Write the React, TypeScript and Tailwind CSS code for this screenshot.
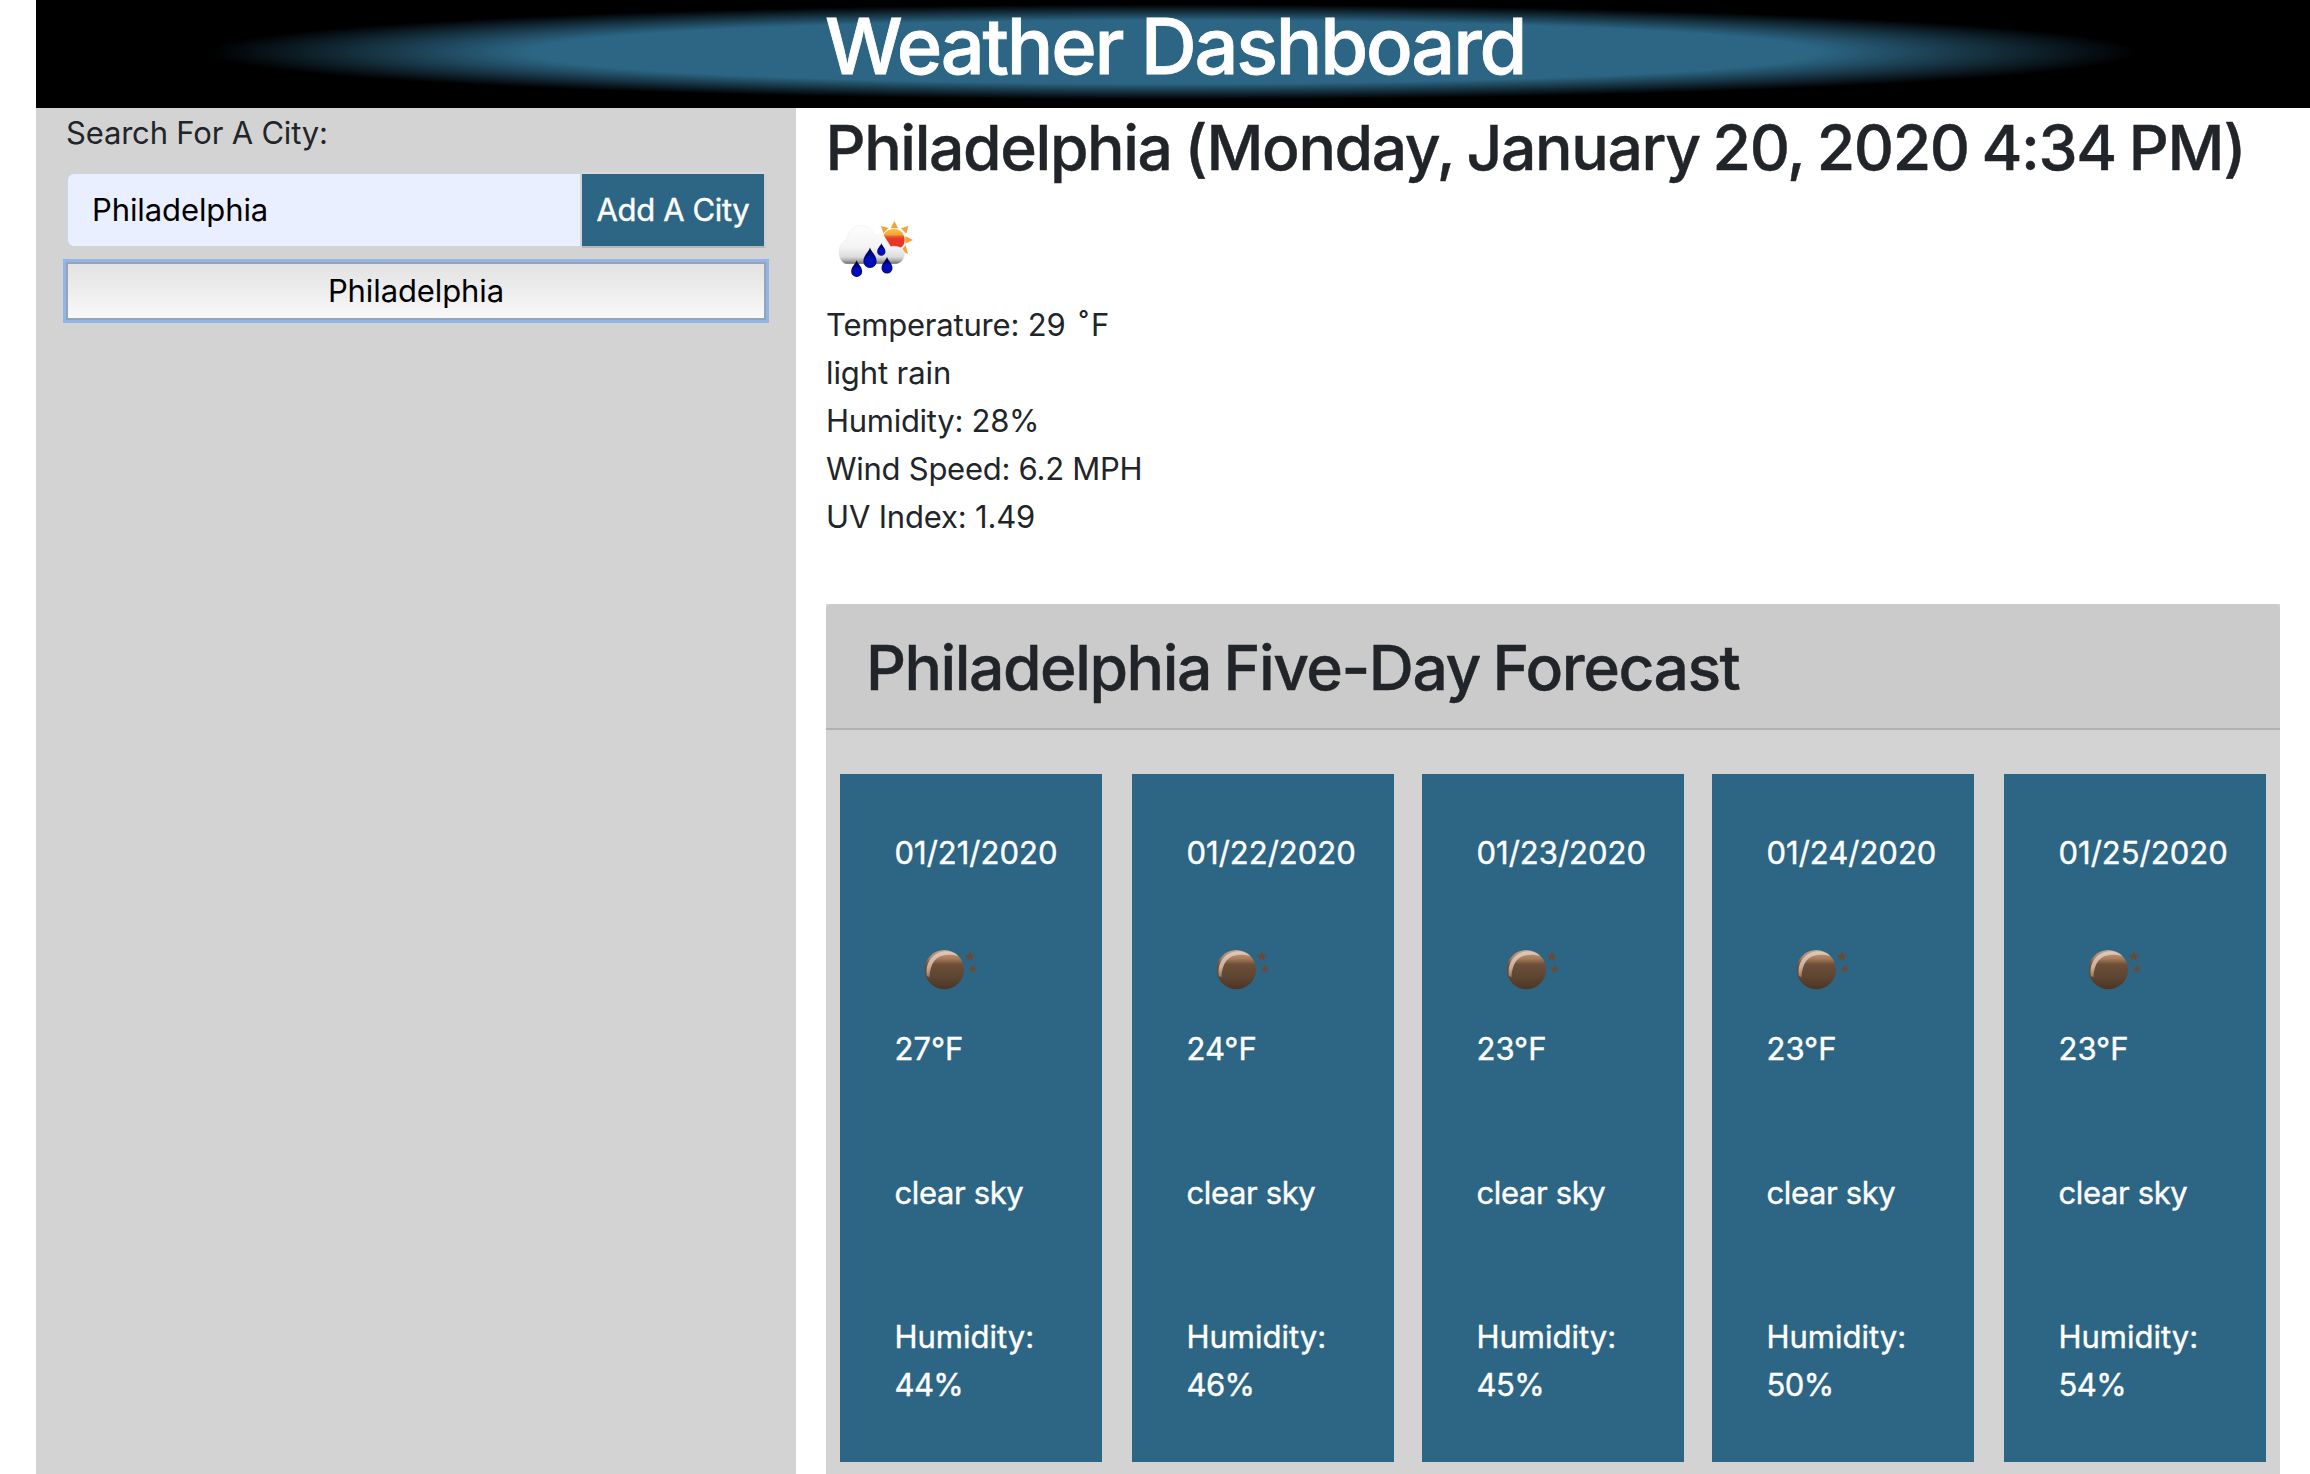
import React from "react";

const days = [
  { date: "01/21/2020", temp: "27°F", sky: "clear sky", humidity: "44%" },
  { date: "01/22/2020", temp: "24°F", sky: "clear sky", humidity: "46%" },
  { date: "01/23/2020", temp: "23°F", sky: "clear sky", humidity: "45%" },
  { date: "01/24/2020", temp: "23°F", sky: "clear sky", humidity: "50%" },
  { date: "01/25/2020", temp: "23°F", sky: "clear sky", humidity: "54%" },
];

function Drop({ x, y, s }: { x: number; y: number; s: number }) {
  return (
    <path
      transform={`translate(${x} ${y}) scale(${s})`}
      d="M0 0C2 12 20 24 20 42A20 20 0 0 1 -20 42C-20 24 -2 12 0 0Z"
      fill="url(#drop)"
    />
  );
}

function LightRainIcon() {
  return (
    <svg viewBox="0 0 100 100" className="block size-[100px]" aria-hidden="true">
      <defs>
        <linearGradient id="cloud" x1="0" y1="48" x2="0" y2="164" gradientUnits="userSpaceOnUse">
          <stop offset="0" stopColor="#fdfdfd" />
          <stop offset="0.55" stopColor="#f4f4f4" />
          <stop offset="0.8" stopColor="#dcdcdc" />
          <stop offset="0.9" stopColor="#a8a8a8" />
          <stop offset="1" stopColor="#555555" />
        </linearGradient>
        <linearGradient id="sun" x1="0" y1="58" x2="0" y2="110" gradientUnits="userSpaceOnUse">
          <stop offset="0" stopColor="#f6c045" />
          <stop offset="0.3" stopColor="#f5a535" />
          <stop offset="0.42" stopColor="#ec5a2c" />
          <stop offset="0.55" stopColor="#e8372a" />
          <stop offset="1" stopColor="#ea3323" />
        </linearGradient>
        <radialGradient id="drop" cx="0" cy="42" r="34" gradientUnits="userSpaceOnUse">
          <stop offset="0" stopColor="#0010d8" />
          <stop offset="0.4" stopColor="#0008a8" />
          <stop offset="0.75" stopColor="#03046a" />
          <stop offset="1" stopColor="#04043c" />
        </radialGradient>
        <filter id="edge" x="-10%" y="-10%" width="120%" height="120%">
          <feGaussianBlur stdDeviation="1.8" />
        </filter>
      </defs>
      <g transform="translate(-6 10) scale(0.33333)" filter="url(#edge)">
        <g fill="#f0a23c">
          <path d="M223 33L234 55L212 55Z" />
          <path d="M183 48L206 54L190 70Z" />
          <path d="M265 48L259 71L243 55Z" />
          <path d="M279 90L256 101L256 79Z" />
          <path d="M264 132L242 122L257 106Z" />
        </g>
        <path d="M191 74C198 62 210 57 224 57C242 57 254 72 254 90C254 100 250 108 242 113L205 110Z" fill="url(#sun)" />
        <path
          d="M78 162C64 158 57 143 57 128C57 108 66 94 80 88C84 62 100 47 125 47C144 47 160 60 165 80C176 70 190 72 197 86C203 94 206 100 212 110C230 105 253 114 254 130C254 146 244 160 230 162Z"
          fill="url(#cloud)"
          stroke="#ebebeb"
          strokeWidth="1.5"
        />
        <Drop x={110} y={150} s={0.82} />
        <Drop x={150} y={112} s={1} />
        <Drop x={184} y={99} s={0.62} />
        <Drop x={201} y={140} s={0.82} />
      </g>
    </svg>
  );
}

function ClearNightIcon() {
  return (
    <svg viewBox="0 0 100 100" className="block size-[100px]" aria-hidden="true">
      <defs>
        <linearGradient id="moon" x1="0" y1="60" x2="0" y2="178" gradientUnits="userSpaceOnUse">
          <stop offset="0" stopColor="#c9a78f" />
          <stop offset="0.22" stopColor="#a87a58" />
          <stop offset="0.36" stopColor="#6f5038" />
          <stop offset="0.7" stopColor="#5c4431" />
          <stop offset="1" stopColor="#4c3624" />
        </linearGradient>
        <linearGradient id="rim" x1="60" y1="60" x2="70" y2="165" gradientUnits="userSpaceOnUse">
          <stop offset="0" stopColor="#e0d0c5" />
          <stop offset="0.5" stopColor="#c9ab98" />
          <stop offset="0.9" stopColor="#7d573f" />
        </linearGradient>
        <filter id="soft" x="-10%" y="-10%" width="120%" height="120%">
          <feGaussianBlur stdDeviation="1.8" />
        </filter>
      </defs>
      <g transform="translate(14.5 6) scale(0.33333)" filter="url(#soft)">
        <circle cx="104.500" cy="119" r="59" fill="url(#moon)" />
        <path d="M52 138C46 96 72 66 108 64C124 63 138 70 146 78C132 74 122 73 108 75C80 78 62 98 60 142Z" fill="url(#rim)" />
        <g fill="#6b4a34">
          <path d="M181 63L185 74L197 75L188 82L191 93L181 87L171 93L174 82L165 75L177 74Z" />
          <path d="M190 103L193 112L203 113L195 119L198 128L190 123L182 128L184 119L177 113L187 112Z" />
        </g>
      </g>
    </svg>
  );
}

export default function App() {
  return (
    <div className="h-[1474px] w-[2310px] overflow-hidden bg-white pl-9 font-['Inter',sans-serif] text-[31px] leading-[48px] text-[#212529]">
      <header className="-mt-1 h-28 bg-[radial-gradient(#2c6684_40%,#000_60%)] pt-[1.5px] pl-[789px]">
        <h1 className="text-[77.6px] leading-[96px] font-medium tracking-[-2.25px] whitespace-nowrap text-white [-webkit-text-stroke:0.8px]">
          Weather Dashboard
        </h1>
      </header>

      <div className="flex h-[1366px]">
        <aside className="w-[760px] shrink-0 bg-[#d3d3d3] pt-px pl-[30px]">
          <label htmlFor="city" className="block tracking-[-0.18px]">
            Search For A City:
          </label>
          <div className="mt-[15px] flex h-[76px] w-[700px]">
            <input
              id="city"
              defaultValue="Philadelphia"
              className="w-[516px] rounded-l-lg border-2 border-[#ced4da] bg-[#e9effe] pl-6 tracking-[-0.1px] text-black outline-none"
            />
            <button className="w-[184px] border-2 border-l-0 border-t-[#dadada] border-r-[#cfcfcf] border-b-[#b9b6b5] bg-[#2c6684] tracking-[-0.37px] whitespace-nowrap text-white [-webkit-text-stroke:0.4px]">
              Add A City
            </button>
          </div>
          <button className="mt-[15px] ml-px block h-14 w-[698px] border border-[#a3a3a3] bg-linear-to-b from-[#e3e3e3] to-[#f8f8f8] pb-px tracking-[-0.1px] text-black shadow-[0_0_0_1px_#84a4d2,0_0_0_4px_#93b5e3]">
            Philadelphia
          </button>
        </aside>

        <main className="w-[1484px] pl-[30px]">
          <h2 className="ml-[-0.5px] pt-[2px] text-[62.4px] leading-[76px] font-medium tracking-[-1.37px] whitespace-nowrap [-webkit-text-stroke:0.4px] [word-spacing:-2.4px]">
            Philadelphia (Monday, January 20, 2020 4:34 PM)
          </h2>
          <div className="mt-[14px]">
            <LightRainIcon />
          </div>
          <div className="pt-px">
            <p className="tracking-[-0.2px]">
              Temperature: 29 <span className="mr-[3px] ml-[5px]">˚</span>F
            </p>
            <p className="tracking-[-0.1px]">light rain</p>
            <p className="tracking-[-0.28px]">Humidity: 28%</p>
            <p className="tracking-[-0.26px]">Wind Speed: 6.2 MPH</p>
            <p className="tracking-[-0.18px]">UV Index: 1.49</p>
          </div>

          <section className="mt-[63px] h-[870px] bg-[#d3d3d3]">
            <div className="h-[126px] rounded-t-md border-b-2 border-[#b1b1b1] bg-[#cbcbcb] pt-[26px] pl-10">
              <h2 className="text-[62.4px] leading-[76px] font-medium tracking-[-1.48px] whitespace-nowrap [-webkit-text-stroke:0.4px] [word-spacing:-2.4px]">
                Philadelphia Five-Day Forecast
              </h2>
            </div>
            <div className="grid grid-cols-[292px_290px_290px_292px_290px] pt-11">
              {days.map((d) => (
                <article
                  key={d.date}
                  className="ml-[14px] h-[688px] w-[262px] bg-[#2c6684] pt-[55px] pl-[54.5px] text-white [-webkit-text-stroke:0.4px]"
                >
                  <p>{d.date}</p>
                  <div className="mt-[47px]">
                    <ClearNightIcon />
                  </div>
                  <p className="pt-px">{d.temp}</p>
                  <p className="mt-24 tracking-[-0.37px]">{d.sky}</p>
                  <p className="mt-24">
                    Humidity:
                    <br />
                    <span className="tracking-[-0.6px]">{d.humidity}</span>
                  </p>
                </article>
              ))}
            </div>
          </section>
        </main>
      </div>
    </div>
  );
}
